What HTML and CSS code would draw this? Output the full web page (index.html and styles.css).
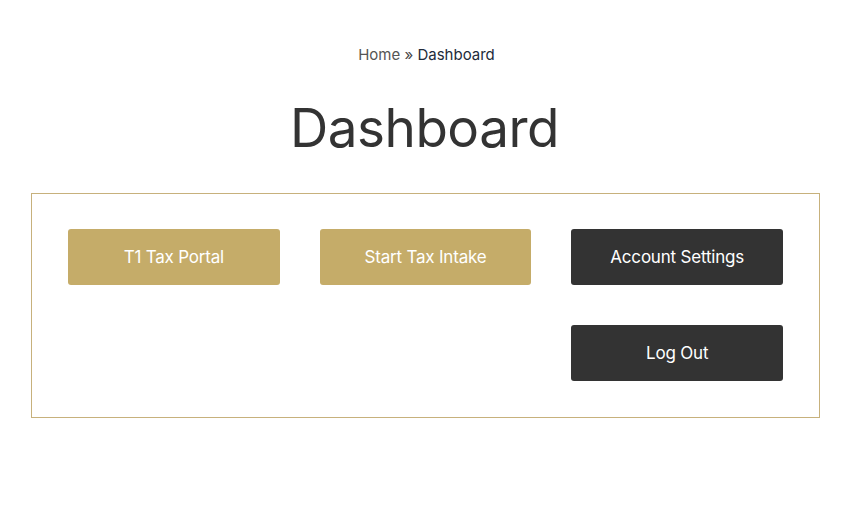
FILE: index.html
```html
<!DOCTYPE html>
<html>
<head>
<meta charset="utf-8">
<link rel="stylesheet" href="styles.css">
</head>
<body>
<nav class="breadcrumb"><a class="crumb-link">Home</a> <span class="sep">»</span> <span class="current">Dashboard</span></nav>
<h1 class="title">Dashboard</h1>
<section class="panel">
  <div class="grid">
    <a class="btn btn-gold">T1 Tax Portal</a>
    <a class="btn btn-gold">Start Tax Intake</a>
    <a class="btn btn-dark">Account Settings</a>
    <a class="btn btn-dark logout">Log Out</a>
  </div>
</section>
</body>
</html>
```
FILE: styles.css
```css
html, body { margin: 0; padding: 0; background: #fff; }
body {
  font-family: "Inter", "Lato", sans-serif;
  color: #333;
  padding-top: 45px;
}
.breadcrumb {
  text-align: center;
  font-size: 15px;
  line-height: 20px;
  color: #222b3a;
}
.crumb-link { color: #555; }
.sep { color: #444; }
.title {
  text-align: center;
  font-weight: 400;
  font-size: 53px;
  line-height: 70px;
  margin: 28px 0 30px;
  padding-right: 4px;
  color: #333;
  letter-spacing: -0.5px;
}
.panel {
  width: 789px;
  box-sizing: border-box;
  margin: 0 33px 0 31px;
  border: 1px solid #c7b17c;
  padding: 35px 36px 36px 36px;
}
.grid {
  display: grid;
  grid-template-columns: repeat(3, 1fr);
  column-gap: 40px;
  row-gap: 40px;
}
.btn {
  display: flex;
  align-items: center;
  justify-content: center;
  height: 56px;
  border-radius: 3px;
  color: #fff;
  font-size: 17px;
  letter-spacing: -0.2px;
}
.btn-gold { background: #c5ac69; }
.btn-dark { background: #333333; }
.logout { grid-column: 3; }
```
